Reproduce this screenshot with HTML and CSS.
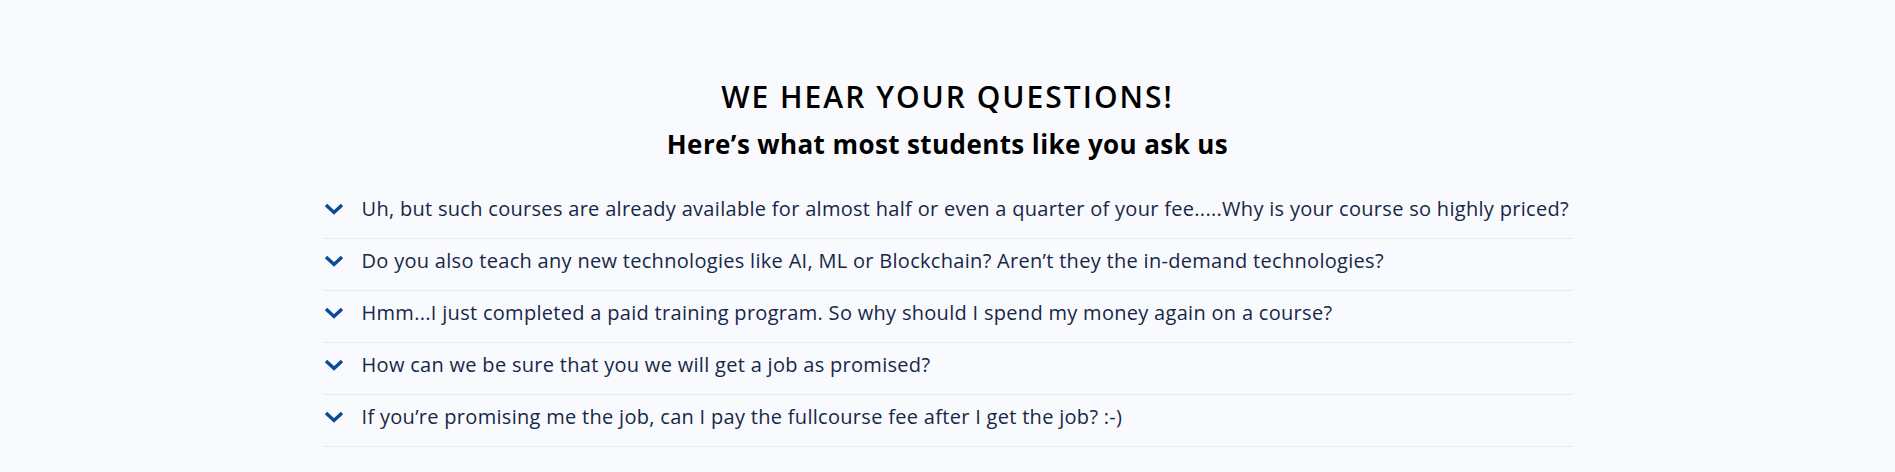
FILE: index.html
```html
<!DOCTYPE html>
<html lang="en">
<head>
<meta charset="utf-8">
<title>FAQ</title>
<link rel="stylesheet" href="styles.css">
</head>
<body>
<section class="faq">
  <div class="faq-head">
    <h2 class="faq-title">WE HEAR YOUR QUESTIONS!</h2>
    <h3 class="faq-sub">Here’s what most students like you ask us</h3>
  </div>
  <ul class="faq-list">
    <li class="faq-item">
      <svg class="chev" viewBox="0 0 20 12" aria-hidden="true"><polyline points="2,2 10,9.5 18,2"/></svg>
      <span class="q">Uh, but such courses are already available for almost half or even a quarter of your fee.....Why is your course so highly priced?</span>
    </li>
    <li class="faq-item">
      <svg class="chev" viewBox="0 0 20 12" aria-hidden="true"><polyline points="2,2 10,9.5 18,2"/></svg>
      <span class="q">Do you also teach any new technologies like AI, ML or Blockchain? Aren’t they the in-demand technologies?</span>
    </li>
    <li class="faq-item">
      <svg class="chev" viewBox="0 0 20 12" aria-hidden="true"><polyline points="2,2 10,9.5 18,2"/></svg>
      <span class="q">Hmm...I just completed a paid training program. So why should I spend my money again on a course?</span>
    </li>
    <li class="faq-item">
      <svg class="chev" viewBox="0 0 20 12" aria-hidden="true"><polyline points="2,2 10,9.5 18,2"/></svg>
      <span class="q">How can we be sure that you we will get a job as promised?</span>
    </li>
    <li class="faq-item">
      <svg class="chev" viewBox="0 0 20 12" aria-hidden="true"><polyline points="2,2 10,9.5 18,2"/></svg>
      <span class="q">If you’re promising me the job, can I pay the fullcourse fee after I get the job? :-)</span>
    </li>
  </ul>
</section>
</body>
</html>
```

FILE: styles.css
```css
html, body {
  margin: 0;
  padding: 0;
}
body {
  background: #f9fafd;
  font-family: "Open Sans", "Noto Sans", sans-serif;
  color: #000;
}
.faq {
  width: 1250px;
  margin: 0 auto;
  padding-top: 78px;
}
.faq-head {
  text-align: center;
}
.faq-title {
  margin: 0;
  font-size: 30px;
  font-weight: 600;
  line-height: 38px;
  letter-spacing: 2px;
  color: #000;
}
.faq-sub {
  margin: 11px 0 0;
  font-size: 26px;
  font-weight: 700;
  line-height: 34px;
  letter-spacing: 0.4px;
  color: #000;
}
.faq-list {
  list-style: none;
  margin: 26px 0 0;
  padding: 0;
}
.faq-item {
  display: flex;
  align-items: center;
  gap: 18px;
  box-sizing: border-box;
  height: 52px;
  padding: 0 0 8px 1px;
  border-bottom: 1px solid #e8ebef;
}
.chev {
  width: 20px;
  height: 12px;
  flex: none;
  fill: none;
  stroke: #0c4a98;
  stroke-width: 3.4;
  stroke-linecap: butt;
  stroke-linejoin: miter;
}
.q {
  font-size: 20px;
  color: #162848;
  line-height: 26px;
  letter-spacing: 0.3px;
}
```
